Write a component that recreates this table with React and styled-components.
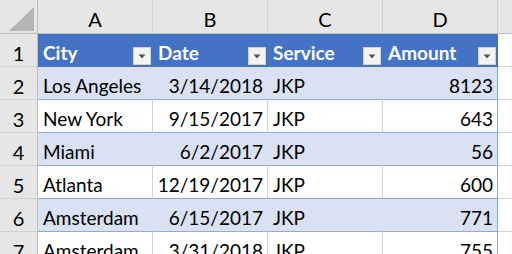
import { Fragment } from "react";
import styled, { createGlobalStyle } from "styled-components";

const GlobalStyle = createGlobalStyle`
  html, body {
    margin: 0;
    padding: 0;
    background: #ffffff;
    overflow: hidden;
  }
`;

const Sheet = styled.div`
  display: grid;
  grid-template-columns: 38px 115px 115px 115px 115px 1fr;
  grid-auto-rows: 33px;
  grid-template-rows: 34px;
  width: 512px;
  height: 254px;
  overflow: hidden;
  font-family: Lato, "Liberation Sans", sans-serif;
  color: #000000;
`;

const Corner = styled.div`
  box-sizing: border-box;
  background: #e6e6e6;
  border-right: 1px solid #bdbdbd;
  border-bottom: 1px solid #bdbdbd;
  display: flex;
  align-items: flex-end;
  justify-content: flex-end;
  padding: 0 3px 2px 0;
`;

const ColHead = styled.div`
  box-sizing: border-box;
  background: #e6e6e6;
  border-right: 1px solid ${(p) => (p.$last ? "transparent" : "#d0d0d0")};
  border-bottom: 1px solid #bdbdbd;
  display: flex;
  align-items: center;
  justify-content: center;
  font-size: 20px;
  padding-top: 5px;
`;

const RowHead = styled.div`
  box-sizing: border-box;
  background: #e6e6e6;
  border-right: 1px solid #bdbdbd;
  border-bottom: 1px solid #d0d0d0;
  display: flex;
  align-items: center;
  justify-content: center;
  font-size: 20px;
  padding-top: 6px;
`;

const Cell = styled.div`
  box-sizing: border-box;
  position: relative;
  display: flex;
  align-items: flex-end;
  justify-content: ${(p) => (p.$right ? "flex-end" : "flex-start")};
  padding: 0 4px 2px 5px;
  font-size: 19px;
  white-space: nowrap;
  background: ${(p) => (p.$head ? "#4472c4" : p.$band ? "#d9e1f2" : "#ffffff")};
  color: ${(p) => (p.$head ? "#ffffff" : "#000000")};
  font-weight: ${(p) => (p.$head ? 700 : 400)};
  border-bottom: 1px solid ${(p) => (p.$head ? "#4472c4" : "#8ea9db")};
  border-right: 1px solid
    ${(p) =>
      p.$last
        ? p.$head
          ? "#4472c4"
          : "#8ea9db"
        : p.$head
        ? "#4472c4"
        : p.$band
        ? "#d9e1f2"
        : "#d4d4d4"};
`;

const Blank = styled.div`
  box-sizing: border-box;
  background: #ffffff;
  border-bottom: 1px solid #d4d4d4;
`;

const FilterButton = styled.div`
  position: absolute;
  right: 1px;
  bottom: 1px;
  width: 18px;
  height: 18px;
  box-sizing: border-box;
  background: #f3f3f3;
  border: 1px solid #cfcfcf;
  display: flex;
  align-items: center;
  justify-content: center;
`;

const Arrow = () => (
  <svg width="8" height="5" viewBox="0 0 8 5">
    <polygon points="0.5,0.5 7.5,0.5 4,4.5" fill="#555555" />
  </svg>
);

const columns = ["City", "Date", "Service", "Amount"];

const rows = [
  ["Los Angeles", "3/14/2018", "JKP", "8123"],
  ["New York", "9/15/2017", "JKP", "643"],
  ["Miami", "6/2/2017", "JKP", "56"],
  ["Atlanta", "12/19/2017", "JKP", "600"],
  ["Amsterdam", "6/15/2017", "JKP", "771"],
  ["Amsterdam", "3/31/2018", "JKP", "755"],
];

const rightCols = [false, true, false, true];

export default function App() {
  return (
    <>
      <GlobalStyle />
      <Sheet>
        <Corner>
          <svg width="25" height="24" viewBox="0 0 25 24">
            <polygon points="0,24 25,24 25,0" fill="#b4b4b4" />
          </svg>
        </Corner>
        {["A", "B", "C", "D"].map((l) => (
          <ColHead key={l}>{l}</ColHead>
        ))}
        <ColHead $last />

        <RowHead>1</RowHead>
        {columns.map((c, i) => (
          <Cell key={c} $head $last={i === 3}>
            {c}
            <FilterButton>
              <Arrow />
            </FilterButton>
          </Cell>
        ))}
        <Blank />

        {rows.map((r, ri) => (
          <Fragment key={ri}>
            <RowHead>{ri + 2}</RowHead>
            {r.map((v, ci) => (
              <Cell
                key={ci}
                $band={ri % 2 === 0}
                $right={rightCols[ci]}
                $last={ci === 3}
              >
                {v}
              </Cell>
            ))}
            <Blank />
          </Fragment>
        ))}
      </Sheet>
    </>
  );
}
